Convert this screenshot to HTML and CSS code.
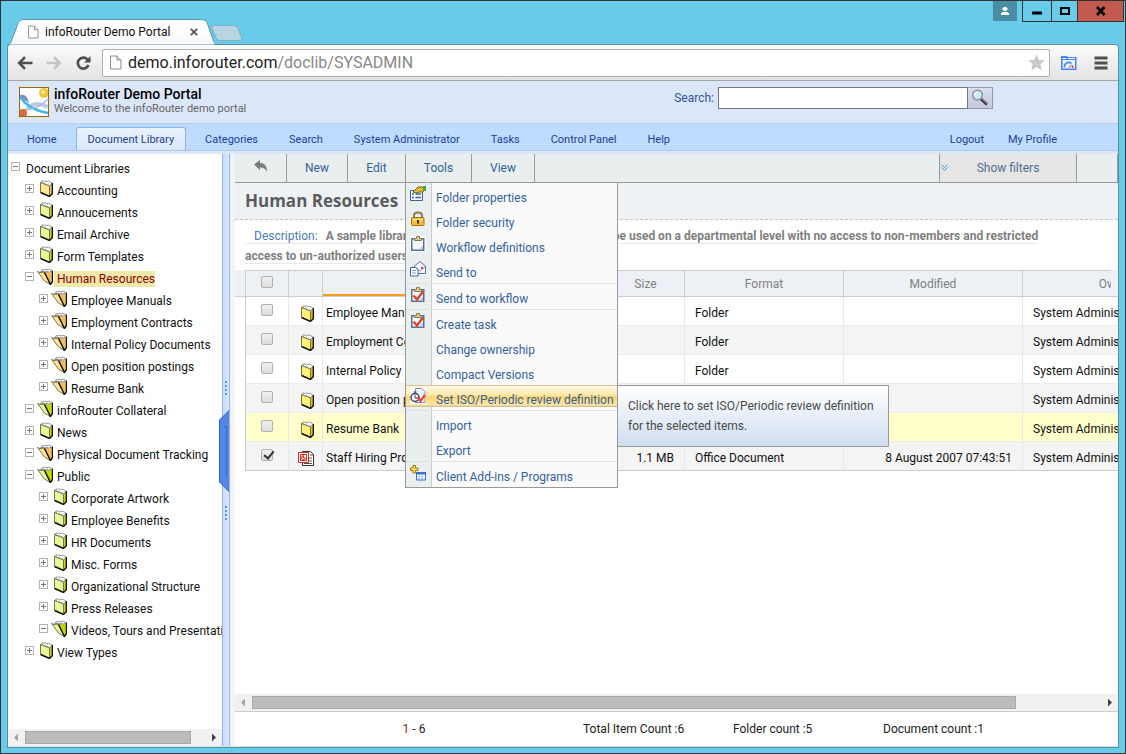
FILE: index.html
```html
<!DOCTYPE html>
<html lang="en">
<head>
<meta charset="utf-8">
<title>infoRouter Demo Portal</title>
<link rel="stylesheet" href="styles.css">
</head>
<body>
<svg class="defs" aria-hidden="true">
  <symbol id="closed" viewBox="0 0 16 17">
    <path class="f-back" d="M12.500 6 15 3v10.500L12.500 16.500z"/>
    <path class="f-edge" d="M3.500 2.500 5.500.7 7 1.500 8.500.8 10 1.800 11.500 1 15 3l-2.500 3z"/>
    <path class="f-front" d="M3.500 2.500 12.500 6v10.500l-9-4.500z"/>
    <path class="f-dots" d="M5 2.500 6.500 1.500M8 3.500 9.500 2.300M11 4.500 12.500 3"/>
    <path class="f-dark" d="M3.500 12.500 12.500 16.500 15.500 13.500V3"/>
  </symbol>
  <symbol id="open" viewBox="0 0 16 17">
    <path class="f-side" d="M4 3.500 15.500 2.500v11l-2.500 3z"/>
    <path class="f-edge" d="M3.500 3.500 5 1.500l2 .5 1-1 2 1 1-1 4.500 1.500L12 4z"/>
    <path class="f-flap" d="M.5 3.500 3 4.500l4.500-.5 6 12.500-6-3.500z"/>
    <path class="f-dots" d="M5 3.500 7 2.500M9 4l2-1.500"/>
    <path class="f-dark" d="M7.500 4.500 13.500 16.500 15.500 13.500V3"/>
  </symbol>
  <symbol id="clip" viewBox="0 0 16 16">
    <path fill="#5a7095" d="M1 2h13.500v13H1z"/>
    <path fill="#f4f8fd" d="M2.500 3.500h10.500v10H2.500z"/>
    <path fill="#b5c5e0" d="M9 13.500 13 9.500v4z"/>
    <path fill="#e0cd98" stroke="#8b7a4a" d="M4.500 4.500v-2h2V.5h3v2h2v2z"/>
  </symbol>
  <symbol id="cliptick" viewBox="0 0 16 16">
    <use href="#clip"/>
    <path fill="none" stroke="#d9452b" stroke-width="2.400" d="m3.500 8.500 3.500 4 6-8"/>
  </symbol>
  <symbol id="page" viewBox="0 0 12 14">
    <path fill="#fbfbfb" stroke="#8c8c8c" d="M.5.5h6.500l4 4v9H.5z"/>
    <path fill="#e2e2e2" stroke="#8c8c8c" d="M7 .5v4h4"/>
  </symbol>
</svg>

<div class="window">
  <header class="frame">
    <div class="tab">
      <svg class="tab-shape" viewBox="0 0 208 26" aria-hidden="true"><defs><linearGradient id="tg" x2="0" y2="1"><stop stop-color="#fff"/><stop offset="1" stop-color="#f8f8f8"/></linearGradient></defs><path fill="url(#tg)" stroke="#5a8fa3" d="M-1 25.500c5 0 5-2 6-5l6-16q1-4 5-4h180q4 0 5 3l6 17q1 5 6 5"/></svg>
      <svg class="page-icon" aria-hidden="true"><use href="#page"/></svg>
      <span class="tab-title">infoRouter Demo Portal</span>
      <button class="tab-close" aria-label="Close tab"><svg viewBox="0 0 8 8"><path stroke="#555" stroke-width="1.800" d="m.8.8 6.400 6.400M7.200.8.8 7.200"/></svg></button>
    </div>
    <button class="newtab" aria-label="New tab"><svg viewBox="0 0 32 16"><path fill="#b7d6e2" stroke="#7fafc2" d="M3 .5h20q3 0 4 3l3.500 9q1 3-2 3H9q-3 0-4-3L1 3Q.5.5 3 .5z"/></svg></button>
    <div class="win-buttons">
      <button class="profile" aria-label="Profile"><svg viewBox="0 0 10 10"><path fill="#fff" d="M3.500 1h3v1h1v2h-1v1h-3V4h-1V2h1zM2 6h6v1h1v2H1V7h1z"/></svg></button>
      <button class="wb min" aria-label="Minimize"><svg viewBox="0 0 12 12"><path d="M1 6.500h10v3H1z"/></svg></button>
      <button class="wb max" aria-label="Maximize"><svg viewBox="0 0 12 12"><path fill="none" stroke="#000" stroke-width="2" d="M2 3h8v6H2z"/></svg></button>
      <button class="wb close" aria-label="Close"><svg viewBox="0 0 12 12"><path fill="none" stroke="#000" stroke-width="2.600" d="m2 2 7.500 8M9.500 2 2 10"/></svg></button>
    </div>
  </header>

  <div class="client">
    <div class="chrome-bar">
      <button class="cb" aria-label="Back"><svg viewBox="0 0 16 14"><path fill="none" stroke="#4d4d4d" stroke-width="2.600" d="M15.500 7H2.500M8 1.200 2.200 7 8 12.800"/></svg></button>
      <button class="cb" aria-label="Forward"><svg viewBox="0 0 16 14"><path fill="none" stroke="#c4c4c4" stroke-width="2.600" d="M.5 7h13M8 1.200 13.800 7 8 12.800"/></svg></button>
      <button class="cb" aria-label="Reload"><svg viewBox="0 0 16 14"><path fill="none" stroke="#4d4d4d" stroke-width="2.600" d="M12.500 3.500A5.500 5.500 0 1 0 13.500 9"/><path fill="#4d4d4d" d="M15.500 0v6.500H9z"/></svg></button>
      <div class="omnibox">
        <svg class="page-icon" aria-hidden="true"><use href="#page"/></svg>
        <span class="url">demo.inforouter.com<span>/doclib/SYSADMIN</span></span>
        <svg class="star" viewBox="0 0 17 17" aria-hidden="true"><path fill="#c9c9c9" d="m8.500 0 2.400 5.900 6.100.4-4.700 4 1.500 6.200-5.300-3.400-5.300 3.400 1.500-6.200L0 6.300l6.100-.4z"/></svg>
      </div>
      <button class="cb ext" aria-label="Extension"><svg viewBox="0 0 16 14"><path fill="#4a86e8" d="M0 0h6l1 1h8.500v13H0z"/><path fill="#eaf2fe" d="M1.500 4h12.500v8.500H1.500z"/><path fill="#fff" d="M1.500 2h4v1h-4zM7 2h7v1H7z"/><path fill="none" stroke="#4a86e8" stroke-width="1.600" d="M3.500 11.500a4.300 4.300 0 0 1 7-4"/><path stroke="#666" d="m7.500 11.500 3-2.500"/><path stroke="#d33" stroke-width="1.500" d="M11.500 9.500v2.500"/></svg></button>
      <button class="cb burger" aria-label="Menu"><svg viewBox="0 0 14 14"><path stroke="#505050" stroke-width="3" d="M.5 2h13M.5 7h13M.5 12h13"/></svg></button>
    </div>

    <div class="banner">
      <svg class="logo" viewBox="0 0 30 30" aria-hidden="true">
        <rect width="30" height="30" fill="#fdfdff"/>
        <path fill="#7e8fbd" d="M1 8q7-2 9 8-5-4-9-4z"/>
        <path fill="none" stroke="#c3cbe3" stroke-width="4" d="M8 22Q16 13 29 20"/>
        <path fill="none" stroke="#38b9dd" stroke-width="2.400" d="M1 10q9 13 28 16"/>
        <path fill="none" stroke="#a9bfe0" stroke-width="1.500" d="M5 23Q20 22 29 12"/>
        <circle cx="25" cy="6" r="5" fill="#f0c437"/><circle cx="24" cy="5" r="2" fill="#fbe795"/>
        <circle cx="4" cy="26" r="4" fill="#d76b3c"/>
        <rect x=".5" y=".5" width="29" height="29" fill="none" stroke="#96690a"/>
      </svg>
      <div class="titles"><h1>infoRouter Demo Portal</h1><p>Welcome to the infoRouter demo portal</p></div>
      <form class="search">
        <label for="q">Search:</label><input id="q" type="text"><button type="button" aria-label="Search"><svg viewBox="0 0 18 18"><path stroke="#333" stroke-width="3" d="m10 10 6 5.500"/><path stroke="#aaa" d="m10.500 9.500 6 5.500"/><circle cx="6.500" cy="6" r="4.800" fill="#cdeaf0" stroke="#7f969c" stroke-width="1.400"/><path fill="none" stroke="#fff" stroke-width="1.300" d="M3.800 6.500a3 3 0 0 1 2.700-3.200"/></svg></button>
      </form>
    </div>

    <nav class="mainnav">
      <a href="#">Home</a><a href="#" class="on">Document Library</a><a href="#">Categories</a><a href="#">Search</a><a href="#">System Administrator</a><a href="#">Tasks</a><a href="#">Control Panel</a><a href="#">Help</a>
      <span class="right"><a href="#">Logout</a><a href="#">My Profile</a></span>
    </nav>

    <div class="body">
      <aside class="side">
        <ul class="tree">
          <li class="l0"><i class="tg m"></i><a href="#">Document Libraries</a></li>
          <li><i class="tg"></i><svg class="fo gold"><use href="#closed"/></svg><a href="#">Accounting</a></li>
          <li><i class="tg"></i><svg class="fo"><use href="#closed"/></svg><a href="#">Annoucements</a></li>
          <li><i class="tg"></i><svg class="fo"><use href="#closed"/></svg><a href="#">Email Archive</a></li>
          <li><i class="tg"></i><svg class="fo"><use href="#closed"/></svg><a href="#">Form Templates</a></li>
          <li><i class="tg m"></i><svg class="fo gold"><use href="#open"/></svg><a href="#" class="sel">Human Resources</a></li>
          <li class="l2"><i class="tg"></i><svg class="fo gold"><use href="#open"/></svg><a href="#">Employee Manuals</a></li>
          <li class="l2"><i class="tg"></i><svg class="fo gold"><use href="#open"/></svg><a href="#">Employment Contracts</a></li>
          <li class="l2"><i class="tg"></i><svg class="fo gold"><use href="#open"/></svg><a href="#">Internal Policy Documents</a></li>
          <li class="l2"><i class="tg"></i><svg class="fo gold"><use href="#open"/></svg><a href="#">Open position postings</a></li>
          <li class="l2"><i class="tg"></i><svg class="fo gold"><use href="#open"/></svg><a href="#">Resume Bank</a></li>
          <li><i class="tg m"></i><svg class="fo"><use href="#open"/></svg><a href="#">infoRouter Collateral</a></li>
          <li><i class="tg"></i><svg class="fo"><use href="#closed"/></svg><a href="#">News</a></li>
          <li><i class="tg m"></i><svg class="fo gold"><use href="#open"/></svg><a href="#">Physical Document Tracking</a></li>
          <li><i class="tg m"></i><svg class="fo"><use href="#open"/></svg><a href="#">Public</a></li>
          <li class="l2"><i class="tg"></i><svg class="fo"><use href="#closed"/></svg><a href="#">Corporate Artwork</a></li>
          <li class="l2"><i class="tg"></i><svg class="fo"><use href="#closed"/></svg><a href="#">Employee Benefits</a></li>
          <li class="l2"><i class="tg"></i><svg class="fo"><use href="#closed"/></svg><a href="#">HR Documents</a></li>
          <li class="l2"><i class="tg"></i><svg class="fo"><use href="#closed"/></svg><a href="#">Misc. Forms</a></li>
          <li class="l2"><i class="tg"></i><svg class="fo"><use href="#closed"/></svg><a href="#">Organizational Structure</a></li>
          <li class="l2"><i class="tg"></i><svg class="fo"><use href="#closed"/></svg><a href="#">Press Releases</a></li>
          <li class="l2"><i class="tg m"></i><svg class="fo"><use href="#open"/></svg><a href="#">Videos, Tours and Presentations</a></li>
          <li><i class="tg"></i><svg class="fo"><use href="#closed"/></svg><a href="#">View Types</a></li>
        </ul>
        <div class="hbar"><span class="al"></span><span class="track"><span class="thumb side-thumb"></span></span><span class="ar"></span></div>
      </aside>

      <div class="splitter">
        <svg class="grip" viewBox="0 0 10 140" aria-hidden="true">
          <path fill="#5f93f2" d="M6 1h2v2H6zM6 5h2v2H6zM6 9h2v2H6zM6 13h2v2H6zM6 126h2v2H6zM6 130h2v2H6zM6 134h2v2H6zM6 138h2v2H6z"/>
          <path fill="#5585e4" stroke="#2a62d6" d="M10.500 30 .5 40v62l10 10z"/>
          <path fill="none" stroke="#2f6fe6" d="M5 46.500h2.500V96"/>
        </svg>
      </div>

      <main class="main">
        <div class="toolbar">
          <button class="t-back" aria-label="Up"><svg viewBox="0 0 14 13"><path fill="#7b7b7b" d="M0 4.500 6 0v3q7 0 7 9-2-5-7-4.500V10z"/></svg></button>
          <button class="t-new">New</button>
          <button class="t-edit">Edit</button>
          <div class="t-tools">
            <button>Tools</button>
            <ul class="menu">
              <li><svg viewBox="0 0 16 16"><path fill="#f7faff" stroke="#41608f" d="M.5 4.500h12v10H.5z"/><path stroke="#41608f" stroke-width="1.300" d="M2 8h2M2 11.500h2M5.500 8H11M5.500 11.500H11"/><path fill="#e5ba35" stroke="#7d5e11" d="m3 6 5-5h4l3 2-2 3H9L6 7z"/><path fill="#44a83b" d="M13 0h3v5h-3z"/></svg><a href="#">Folder properties</a></li>
              <li><svg viewBox="0 0 16 16"><path fill="none" stroke="#8b7a4a" stroke-width="2" d="M4 7V4.500q0-3 4-3t4 3V7"/><rect x="1.500" y="6.500" width="12.500" height="8" rx="1" fill="#f2bd3c" stroke="#ab6e13"/><path fill="#fbe29a" d="M3 8h9.500v1.500H3z"/><path fill="#4c2f08" d="M7 9h2v3.500H7z"/></svg><a href="#">Folder security</a></li>
              <li><svg viewBox="0 0 16 16"><path fill="#fff" d="M0 0h16v16H0z"/><use href="#clip"/></svg><a href="#">Workflow definitions</a></li>
              <li><svg viewBox="0 0 16 16"><path fill="#f2f6fc" stroke="#5a7095" d="M4.500 12.500V5L10 .5 15.500 5v7.500z"/><path fill="none" stroke="#8aa0c4" d="m5 6 5 4 5-4"/><path fill="#e23b2f" d="M11 6h2v2h-2z"/><path fill="#fff" stroke="#41608f" d="M.5 6.500h5l2.500 2v6.500H.5z"/><path stroke="#7c95bf" d="M2 9.500h4M2 12h4"/></svg><a href="#">Send to</a></li>
              <li class="sep"><svg viewBox="0 0 16 16"><use href="#cliptick"/></svg><a href="#">Send to workflow</a></li>
              <li class="sep"><svg viewBox="0 0 16 16"><use href="#cliptick"/></svg><a href="#">Create task</a></li>
              <li><a href="#">Change ownership</a></li>
              <li><a href="#">Compact Versions</a></li>
              <li class="hot"><svg viewBox="0 0 16 16"><path fill="#fff" d="M0 0h16v16H0z"/><path fill="#edf1fa" stroke="#8a93ab" d="M5.500.5h6l3.500 3v11H5.500z"/><circle cx="5" cy="9.500" r="4" fill="#fff" stroke="#33415e" stroke-width="1.500"/><path fill="none" stroke="#33415e" d="M5 7v3h2.500M3.500 4h3"/><path fill="none" stroke="#e0492e" stroke-width="2.200" d="m7.500 9 3 4 4.500-6"/></svg><a href="#">Set ISO/Periodic review definition</a>
                <div class="tip" role="tooltip">Click here to set ISO/Periodic review definition for the selected items.</div></li>
              <li class="sep"><a href="#">Import</a></li>
              <li><a href="#">Export</a></li>
              <li class="sep"><svg viewBox="0 0 16 16"><path fill="#f6e25a" stroke="#9a7d13" d="M3 .5h2.500V3H8v2.500H5.500V8H3V5.500H.5V3H3z"/><path fill="#eef4ff" stroke="#3d6fc9" d="M6.500 7.500h9v7.500h-9z"/><path fill="#3d6fc9" d="M6 7h10v2.500H6z"/><path stroke="#8fb0e8" stroke-dasharray="2 1" d="M8 11.500h6M8 13.500h6"/></svg><a href="#">Client Add-ins / Programs</a></li>
            </ul>
          </div>
          <button class="t-view">View</button>
          <button class="t-filter"><svg viewBox="0 0 8 8"><path fill="none" stroke="#3d9be0" d="m.5.5 3 3 3-3M.5 3.500l3 3 3-3"/></svg><span>Show filters</span></button>
          <span class="t-end"></span>
        </div>

        <h2>Human Resources</h2>
        <p class="desc"><span class="line"><span class="lbl">Description:</span> <b>A sample library that demonstrates how libraries can be used on a departmental level with no access to non-members and restricted access to un-authorized users.</b></span></p>

        <div class="thead">
          <div class="clip"><table><colgroup><col class="c1"><col class="c2"><col class="c3"><col class="c4"><col class="c5"><col class="c6"><col class="c7"></colgroup>
            <tr><th><input type="checkbox" aria-label="Select all"></th><th></th><th class="sorted"></th><th>Size</th><th>Format</th><th>Modified</th><th>Owner</th></tr>
          </table></div>
        </div>
        <div class="tbody">
          <table><colgroup><col class="c1"><col class="c2"><col class="c3"><col class="c4"><col class="c5"><col class="c6"><col class="c7"></colgroup>
            <tr><td><input type="checkbox" aria-label="Employee Manuals"></td><td><svg class="fo yel"><use href="#closed"/></svg></td><td>Employee Manuals</td><td></td><td>Folder</td><td></td><td>System Administrator</td></tr>
            <tr><td><input type="checkbox" aria-label="Employment Contracts"></td><td><svg class="fo yel"><use href="#closed"/></svg></td><td>Employment Contracts</td><td></td><td>Folder</td><td></td><td>System Administrator</td></tr>
            <tr><td><input type="checkbox" aria-label="Internal Policy Documents"></td><td><svg class="fo yel"><use href="#closed"/></svg></td><td>Internal Policy Documents</td><td></td><td>Folder</td><td></td><td>System Administrator</td></tr>
            <tr><td><input type="checkbox" aria-label="Open position postings"></td><td><svg class="fo yel"><use href="#closed"/></svg></td><td>Open position postings</td><td></td><td>Folder</td><td></td><td>System Administrator</td></tr>
            <tr class="mark"><td><input type="checkbox" aria-label="Resume Bank"></td><td><svg class="fo yel"><use href="#closed"/></svg></td><td>Resume Bank</td><td></td><td>Folder</td><td></td><td>System Administrator</td></tr>
            <tr><td><input type="checkbox" checked aria-label="Staff Hiring Procedures"></td><td><svg class="fo" viewBox="0 0 16 17"><path fill="#fff" stroke="#333" d="M4.500 1.500h8l3 3v11h-11z"/><path stroke="#555" d="M12 5h3M11 8h3M11 11h3M6 13.500h8"/><path fill="#fff" stroke="#d22a1c" d="M.5 2.500h10v10H.5z"/><path fill="#fff" stroke="#d22a1c" d="M2.500 4.500h6v6h-6z"/><path fill="none" stroke="#d22a1c" d="M5.500 5.500A2 2 0 1 0 7.500 8H5.500z"/></svg></td><td>Staff Hiring Procedures</td><td class="num">1.1 MB</td><td>Office Document</td><td class="num">8 August 2007 07:43:51</td><td>System Administrator</td></tr>
          </table>
        </div>
        <div class="hbar"><span class="al"></span><span class="track"><span class="thumb"></span></span><span class="ar"></span></div>
        <footer class="foot"><span class="pg"><em>1</em> - 6</span><span>Total Item Count :6</span><span>Folder count :5</span><span>Document count :1</span></footer>
      </main>
    </div>
  </div>
</div>
</body>
</html>
```
FILE: styles.css
```css
* { box-sizing: border-box; }
html, body { height: 100%; }
body { margin: 0; font: 12px/16px Roboto, "Open Sans", sans-serif; color: #111; overflow: hidden; }
button { font: inherit; color: inherit; background: none; border: 0; padding: 0; margin: 0; }
svg { display: block; flex: none; }
a { color: inherit; text-decoration: none; }
ul { list-style: none; margin: 0; padding: 0; }
p, h1, h2 { margin: 0; }
.defs { position: absolute; width: 0; height: 0; }

.window { height: 100vh; background: #68cbea; border: 1px solid #333; display: flex; flex-direction: column; padding: 0 6px 6px; }

/* Window frame */
.frame { height: 43px; flex: none; display: flex; align-items: flex-start; }
.tab { position: relative; z-index: 1; width: 207px; height: 26px; margin: 18px -3px 0 0; display: flex; align-items: center; padding: 0 10px 0 21px; }
.tab-shape { position: absolute; left: 0; top: 0; width: 207px; height: 26px; }
.page-icon { position: relative; width: 11px; height: 14px; }
.tab-title { position: relative; margin-left: 6px; flex: 1; }
.tab-close { position: relative; width: 8px; height: 8px; margin-right: 6px; }
.tab-close svg { width: 8px; height: 8px; }
.newtab { width: 32px; height: 16px; margin-top: 24px; }
.win-buttons { margin-left: auto; display: flex; margin-right: -5px; }
.win-buttons button { display: flex; align-items: center; justify-content: center; }
.win-buttons svg { width: 12px; height: 12px; }
.profile { width: 24px; height: 20px; background: #4a8ea5; margin-right: 5px; }
.win-buttons .profile svg { width: 10px; height: 10px; }
.wb { height: 21px; border: 1px solid #333; border-top: 0; margin-left: -1px; }
.win-buttons .profile + .wb { margin-left: 0; }
.min { width: 30px; }
.max { width: 27px; }
.close { width: 47px; background: #c25a50; }

.client { flex: 1; min-height: 0; display: flex; flex-direction: column; background: #fff; border: 1px solid #5a8fa3; border-bottom: 0; border-radius: 4px 4px 0 0; box-shadow: 0 1px 0 #4c93ab; }

/* Browser toolbar */
.chrome-bar { height: 36px; flex: none; display: flex; align-items: center; padding: 0 10px 0 9px; background: linear-gradient(#fbfbfb, #e3e3e3); border-bottom: 1px solid #a5a5a5; border-radius: 4px 4px 0 0; }
.cb { width: 16px; height: 14px; margin-right: 13px; }
.cb svg { width: 16px; height: 14px; }
.omnibox { flex: 1; height: 28px; border: 1px solid #b0b0b0; border-radius: 2px; background: #fff; display: flex; align-items: center; padding: 0 4px 0 7px; margin: 0 11px 0 -2px; }
.omnibox .page-icon { width: 12px; height: 15px; }
.url { flex: 1; margin-left: 6px; font-size: 16px; line-height: 20px; color: #222; }
.url span { color: #888; }
.star { width: 17px; height: 17px; }
.ext { margin-right: 17px; }
.burger { width: 14px; margin-right: 0; }
.burger svg { width: 14px; }

/* Portal banner */
.banner { height: 43px; flex: none; display: flex; align-items: flex-start; background: #dbe7f9; border-bottom: 1px solid #b4cdee; padding: 6px 125px 0 11px; }
.logo { width: 30px; height: 30px; }
.titles { flex: 1; margin: -1px 0 0 5px; }
.titles h1 { font-size: 14px; line-height: 16px; font-weight: 500; color: #000; }
.titles p { font-size: 11px; line-height: 14px; color: #666; }
.search { display: flex; align-items: center; }
.search label { color: #35548f; margin-right: 4px; }
.search input { width: 250px; height: 22px; border: 1px solid #777; padding: 0 4px; background: #fff; font: inherit; }
.search button { width: 25px; height: 22px; border: 1px solid #999; border-left: 0; background: linear-gradient(#d9def1, #c3c8e0); padding: 1px 3px; }
.search svg { width: 18px; height: 18px; }

.mainnav { height: 30px; flex: none; display: flex; gap: 7px; align-items: flex-start; background: linear-gradient(#bfdbff 26px, #b0c8e6 26px, #b0c8e6 27px, #dbe7f9 27px); padding: 3px 49px 0 7px; color: #1c3f94; font-size: 11px; line-height: 23px; }
.mainnav a { display: block; height: 23px; padding: 0 11px; border: 1px solid transparent; border-bottom: 0; }
.mainnav a.on { background: linear-gradient(#eaf2fd, #dbe7f9); border-color: #85b8ef; border-radius: 3px 3px 0 0; }
.mainnav .right { margin-left: auto; display: flex; }

.body { flex: 1; min-height: 0; display: flex; border-bottom: 1px solid #e0e0e0; }

/* Library tree */
.side { width: 214px; flex: none; display: flex; flex-direction: column; }
.tree { flex: 1; min-height: 0; overflow: hidden; padding-top: 4px; }
.tree li { height: 22px; display: flex; align-items: flex-start; padding-left: 17px; white-space: nowrap; }
.tree .l0 { padding-left: 3px; }
.tree a { margin: 3px 0 0 1px; padding-left: 3px; }
.tree .l0 a { margin-left: 0; }
.tree .sel { background: #eee8aa; color: #8b0000; }
.tree .l2 { padding-left: 31px; }
.tg { width: 9px; height: 9px; margin: 4px 3px 0 0; border: 1px solid #b4b4b4; background: linear-gradient(#777, #777) center/5px 1px no-repeat, linear-gradient(#777, #777) center/1px 5px no-repeat; flex: none; }
.tg.m { background: linear-gradient(#777, #777) center/5px 1px no-repeat; }
.fo { width: 16px; height: 17px; --front: #e3f99a; --side: #c5d800; }
.fo.gold { --front: #ffe694; --side: #f3bd62; }
.fo.yel { --front: #fff27a; --side: #e8c200; }
.f-front, .f-flap { fill: var(--front); stroke: #77724a; stroke-width: 1; }
.f-back, .f-side { fill: var(--side); stroke: #8a8468; }
.f-edge { fill: #fff; stroke: #999; }
.f-dots { fill: none; stroke: #777; stroke-dasharray: 1 1; }
.f-dark { fill: none; stroke: #111; stroke-width: 1.4; }

.hbar { height: 17px; flex: none; display: flex; align-items: center; background: #f1f1f1; }
.al, .ar { width: 17px; height: 8px; background: #a3a3a3; clip-path: polygon(6px 4px, 10px 0, 10px 8px); }
.ar { background: #404040; clip-path: polygon(7px 0, 11px 4px, 7px 8px); }
.track { flex: 1; height: 13px; }
.thumb { display: block; width: 90%; height: 13px; background: #bcbcbc; border: 1px solid #a8a8a8; }
.side-thumb { width: 92%; }

.splitter { position: relative; width: 13px; flex: none; background: linear-gradient(90deg, #8fb6f3 1px, #c6dcfd 1px, #dbe8fd 7px, #8fb6f3 7px, #8fb6f3 8px, #f1f3f5 8px); }
.grip { position: absolute; left: -3px; top: 226px; width: 10px; height: 140px; }

/* Folder view */
.main { flex: 1; min-width: 0; display: flex; flex-direction: column; }
.toolbar { height: 29px; flex: none; display: flex; background: #e8efee; border-bottom: 1px solid #999; color: #35629a; line-height: 28px; }
.toolbar > button, .t-tools { border-right: 1px solid #999; }
.t-back { width: 52px; }
.t-back svg { width: 14px; height: 13px; margin: -4px auto 0; }
.t-new { width: 61px; }
.t-edit { width: 58px; }
.t-tools { position: relative; width: 66px; }
.t-tools > button { width: 100%; }
.t-view { width: 63px; }
.toolbar .t-filter { width: 138px; margin-left: auto; background: #e6e6e6; border-left: 1px solid #999; display: flex; align-items: center; color: #52708f; }
.t-filter svg { width: 8px; height: 8px; margin-left: 1px; }
.t-filter span { flex: 1; padding-right: 9px; }
.t-end { width: 41px; border-right: 1px solid #999; }

.menu { position: absolute; z-index: 3; top: 28px; left: -1px; width: 213px; border: 1px solid #999; background: linear-gradient(90deg, #e8efee 25px, #ccc 25px, #ccc 26px, #fafafa 26px); color: #35629a; }
.menu li { position: relative; height: 25px; display: flex; white-space: nowrap; padding-left: 4px; }
.menu li.sep { height: 26px; border-top: 1px solid #e2e2e2; }
.menu svg { width: 16px; height: 16px; margin-top: 3px; }
.menu a { line-height: 16px; margin-top: 7px; padding-left: 10px; flex: 1; }
.menu li > a:first-child { padding-left: 26px; }
.menu .hot { background: linear-gradient(#d6c48c 1px, #fff9e6 1px, #ffe9a8 10px, #fdd469 12px, #ffe9b0 20px, #d6c48c 21px) 0 0/100% 22px no-repeat; }
.tip { position: absolute; left: 211px; top: 0; width: 272px; padding: 10px; border: 1px solid #999; background: linear-gradient(#fff, #cfddef); color: #4a4a4a; line-height: 20px; white-space: normal; }

h2 { background: #eef2f5; border-bottom: 1px dashed #c4c4c4; font: bold 17px/36px "Open Sans", sans-serif; height: 37px; padding-left: 10px; color: #5c5c5c; flex: none; }
.desc { padding: 6px 60px 4px 10px; line-height: 20px; color: #808080; }
.desc .line { border-bottom: 1px solid #e8e8e8; }
.lbl { color: #4a7cb5; margin: 0 5px 0 9px; }

.thead { background: #edf1f5; border-bottom: 1px solid #ccc; padding: 0 7px 0 10px; flex: none; }
.clip { overflow: hidden; }
table { width: 965px; table-layout: fixed; border-collapse: separate; border-spacing: 0; border-left: 1px solid #ccc; }
.c1 { width: 43px; } .c2 { width: 34px; } .c3 { width: 284px; } .c4 { width: 78px; } .c5 { width: 159px; } .c6 { width: 179px; }
th { height: 26px; padding: 0; border-top: 1px solid #ccc; border-right: 1px solid #ccc; font-weight: 400; color: #808080; }
th.sorted { background: linear-gradient(#f7a014, #f7a014) bottom/100% 2px no-repeat; }
.tbody { flex: 1; min-height: 0; overflow: hidden; padding-left: 10px; }
td { height: 29px; padding: 3px 10px 0; border-right: 1px solid #e8e8e8; border-bottom: 1px solid #ececec; white-space: nowrap; }
td:first-child, td:nth-child(2) { padding: 0; text-align: center; }
td:nth-child(3) { padding-left: 3px; }
td .fo { margin: 4px auto 0; }
tr:nth-child(even) td { background: #f4f4f4; }
tr.mark td { background: #ffc; }
.tbody tr:last-child td { border-bottom-color: #ccc; }
.num { text-align: right; }
input[type=checkbox] { appearance: none; display: block; width: 12px; height: 12px; margin: 0 auto 3px; border: 1px solid #b0b0b0; border-radius: 2px; background: linear-gradient(#f0f0f0, #dcdcdc); }
input[type=checkbox]:checked::after { content: ""; display: block; width: 4px; height: 8px; margin: -1px 0 0 4px; border: solid #333; border-width: 0 2px 2px 0; transform: rotate(40deg); }

.foot { height: 35px; flex: none; border-top: 1px solid #ccc; display: grid; grid-template-columns: 348px 150px 150px 1fr; align-items: center; color: #222; }
.pg { text-align: center; padding-left: 10px; }
.foot em { font-style: normal; color: #8b2020; }
```
